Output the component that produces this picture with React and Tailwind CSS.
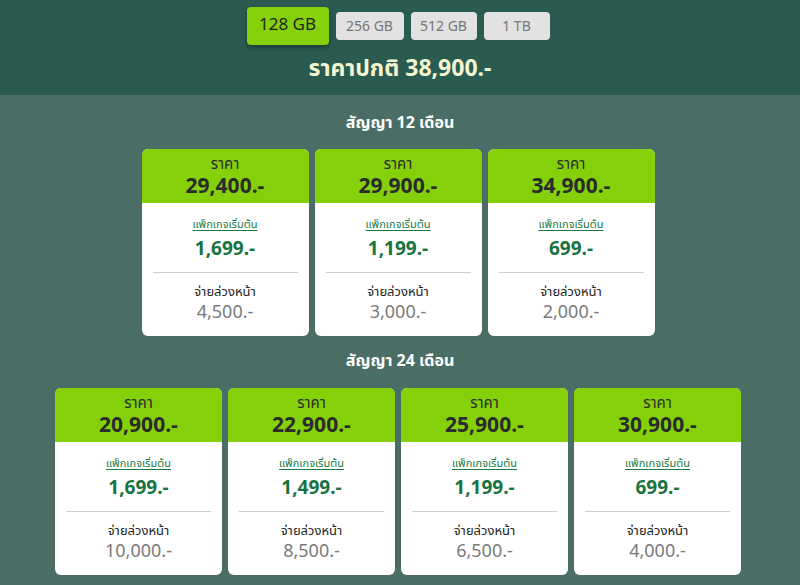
import React from "react";

const row1 = [
  { price: "29,400.-", pkg: "1,699.-", pay: "4,500.-" },
  { price: "29,900.-", pkg: "1,199.-", pay: "3,000.-" },
  { price: "34,900.-", pkg: "699.-", pay: "2,000.-" },
];
const row2 = [
  { price: "20,900.-", pkg: "1,699.-", pay: "10,000.-" },
  { price: "22,900.-", pkg: "1,499.-", pay: "8,500.-" },
  { price: "25,900.-", pkg: "1,199.-", pay: "6,500.-" },
  { price: "30,900.-", pkg: "699.-", pay: "4,000.-" },
];

function Card({ d }) {
  return (
    <div className="w-[167px] h-[187px] rounded-[6px] overflow-hidden bg-white flex flex-col">
      <div className="h-[54px] bg-[#84d10a] flex flex-col items-center pt-[6px] text-[#2b2b2b]">
        <div className="text-[15px] leading-[20px]">ราคา</div>
        <div className="text-[21px] leading-[24px] font-bold">{d.price}</div>
      </div>
      <div className="flex flex-col items-center pt-[14px]">
        <div className="text-[11px] leading-[16px] text-[#1b7a43] underline underline-offset-2">แพ็กเกจเริ่มต้น</div>
        <div className="text-[19px] leading-[22px] font-bold text-[#17733f] mt-[6px]">{d.pkg}</div>
        <div className="w-[145px] h-px bg-[#cfcfcf] mt-[11px]"></div>
        <div className="text-[13px] leading-[18px] text-[#222] mt-[10px]">จ่ายล่วงหน้า</div>
        <div className="text-[18px] leading-[20px] text-[#7a7a7a] mt-[2px]">{d.pay}</div>
      </div>
    </div>
  );
}

export default function App() {
  return (
    <div className="w-[800px] h-[585px] bg-[#4a6d65] overflow-hidden" style={{ fontFamily: '"Noto Sans Thai", "Noto Sans", "Liberation Sans", sans-serif' }}>
      <div className="h-[95px] bg-[#295b51] flex flex-col items-center">
        <div className="flex items-center gap-[7px] pt-[7px] ml-[-4px]">
          <div className="w-[82px] h-[38px] rounded-[4px] bg-[#84d10a] text-[#1f1f1f] text-[17px] flex items-center justify-center shadow-[0_3px_5px_rgba(0,0,0,0.35)]">128 GB</div>
          <div className="w-[68px] h-[28px] rounded-[4px] bg-[#e2e2e2] text-[#777] text-[14px] flex items-center justify-center">256 GB</div>
          <div className="w-[66px] h-[28px] rounded-[4px] bg-[#e2e2e2] text-[#777] text-[14px] flex items-center justify-center">512 GB</div>
          <div className="w-[66px] h-[28px] rounded-[4px] bg-[#e2e2e2] text-[#777] text-[14px] flex items-center justify-center">1 TB</div>
        </div>
        <div className="text-[#f4f6cf] text-[23px] font-bold leading-[30px] mt-[9px]">ราคาปกติ 38,900.-</div>
      </div>
      <div className="flex flex-col items-center">
        <div className="text-white text-[16px] font-bold leading-[22px] mt-[17px]">สัญญา 12 เดือน</div>
        <div className="flex gap-[6px] mt-[15px] ml-[-4px]">
          {row1.map((d, i) => <Card key={i} d={d} />)}
        </div>
        <div className="text-white text-[16px] font-bold leading-[22px] mt-[14px]">สัญญา 24 เดือน</div>
        <div className="flex gap-[6px] mt-[16px] ml-[-4px]">
          {row2.map((d, i) => <Card key={i} d={d} />)}
        </div>
      </div>
    </div>
  );
}
